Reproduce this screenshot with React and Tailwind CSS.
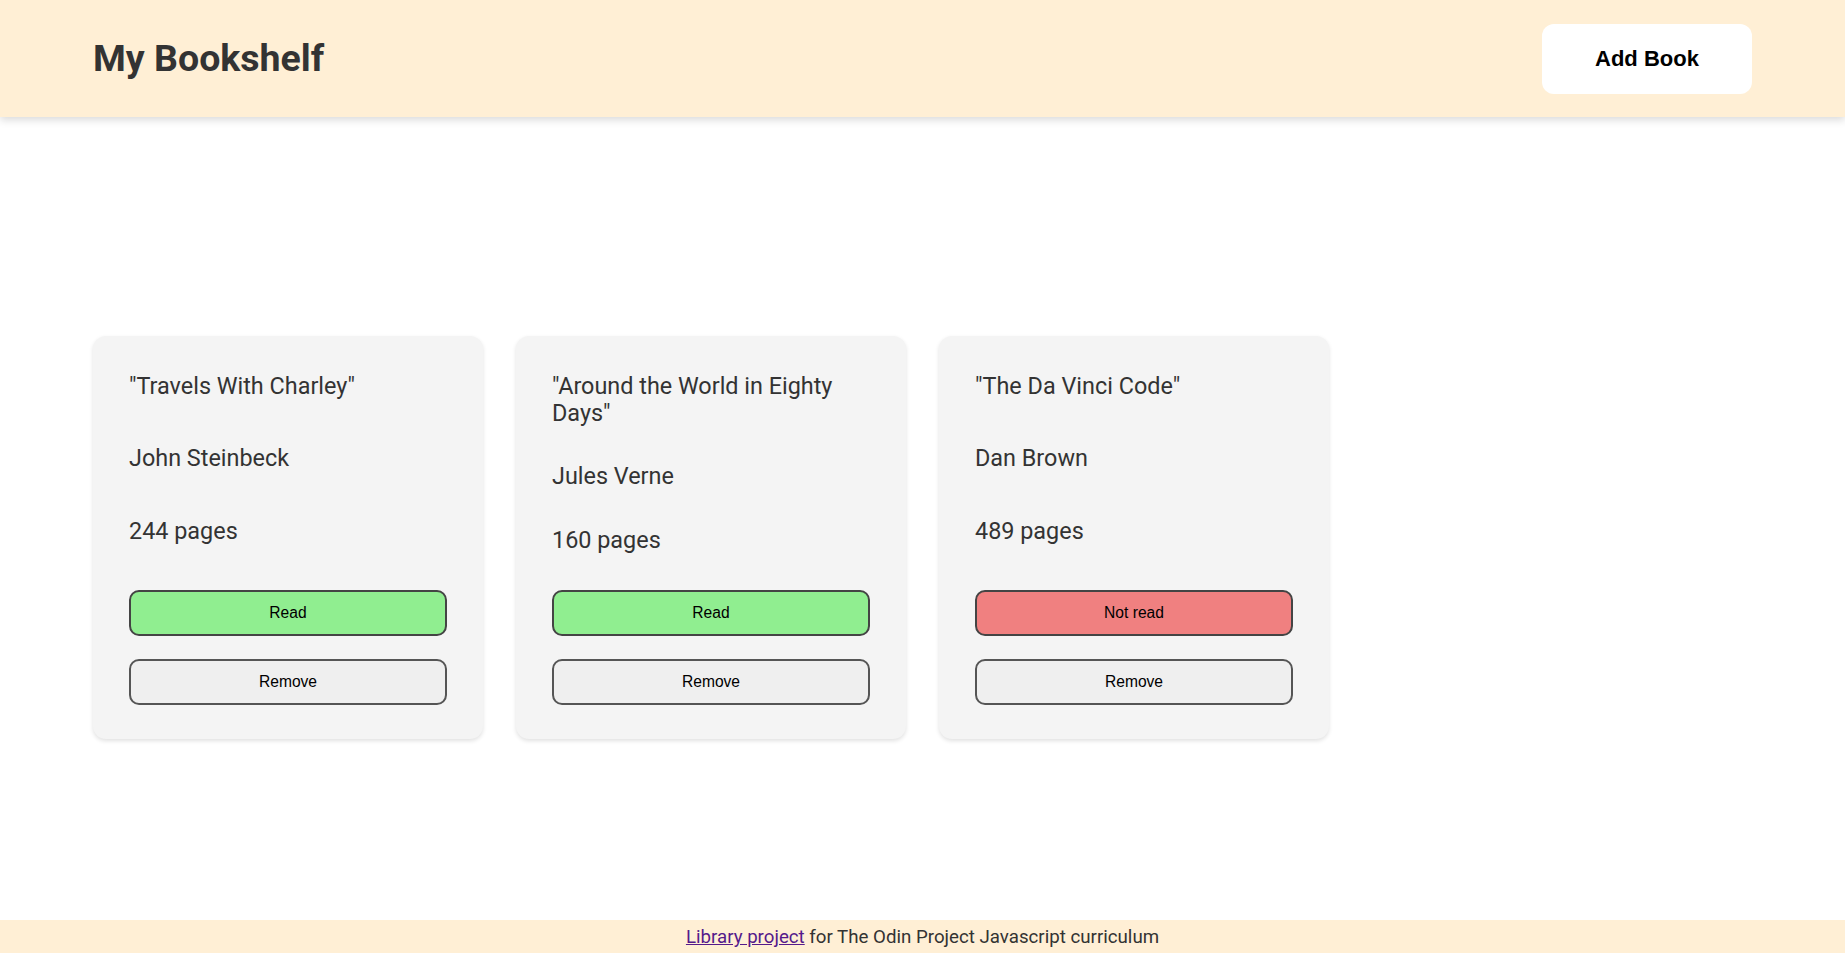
const books = [
  { title: 'Travels With Charley', author: 'John Steinbeck', pages: 244, read: true },
  { title: 'Around the World in Eighty Days', author: 'Jules Verne', pages: 160, read: true },
  { title: 'The Da Vinci Code', author: 'Dan Brown', pages: 489, read: false },
];

const BookCard = ({ book }) => (
  <div className="flex flex-col justify-between gap-[36px] rounded-[13px] bg-[#f4f4f4] px-[36px] pt-[36.5px] pb-[34.5px] shadow-[0_2px_4px_rgba(0,0,0,0.12)]">
    <p className="text-[23.4px] leading-[27.4px]">"{book.title}"</p>
    <p className="text-[23.4px] leading-[27.4px]">{book.author}</p>
    <p className="text-[23.4px] leading-[27.4px]">{book.pages} pages</p>
    <div className="flex flex-col gap-[22.7px] font-['Liberation_Sans',Arial,sans-serif] text-[15.6px] text-black">
      <button
        className={`h-[46px] w-full rounded-[10px] border-2 border-[#444] pb-px ${
          book.read ? 'bg-[#90ee90]' : 'bg-[#f08080]'
        }`}
      >
        {book.read ? 'Read' : 'Not read'}
      </button>
      <button className="h-[46px] w-full rounded-[10px] border-2 border-[#555] bg-[#efefef] pb-px">
        Remove
      </button>
    </div>
  </div>
);

export default function App() {
  return (
    <div className="flex min-h-screen flex-col bg-white font-['Roboto','Liberation_Sans',sans-serif] text-[#333]">
      {/* Header */}
      <header className="relative z-10 flex h-[117px] items-center justify-between bg-[#ffefd5] px-[93px] shadow-[0_3px_8px_rgba(0,0,0,0.15)]">
        <h1 className="text-[37.5px] font-bold">My Bookshelf</h1>
        <button className="h-[70px] w-[210px] rounded-[12px] bg-white font-['Liberation_Sans',Arial,sans-serif] text-[22px] font-bold text-black">
          Add Book
        </button>
      </header>

      {/* Books */}
      <main className="flex-1 px-[93px] pt-[219px]">
        <div className="grid grid-cols-[repeat(auto-fill,390px)] gap-[33px]">
          {books.map((book) => (
            <BookCard key={book.title} book={book} />
          ))}
        </div>
      </main>

      <footer className="flex h-[33px] items-center justify-center bg-[#ffefd5] pt-[2px] text-[18.7px] leading-none">
        <p>
          <a href="#" className="text-[#551a8b] underline">Library project</a> for The Odin Project Javascript curriculum
        </p>
      </footer>
    </div>
  );
}
